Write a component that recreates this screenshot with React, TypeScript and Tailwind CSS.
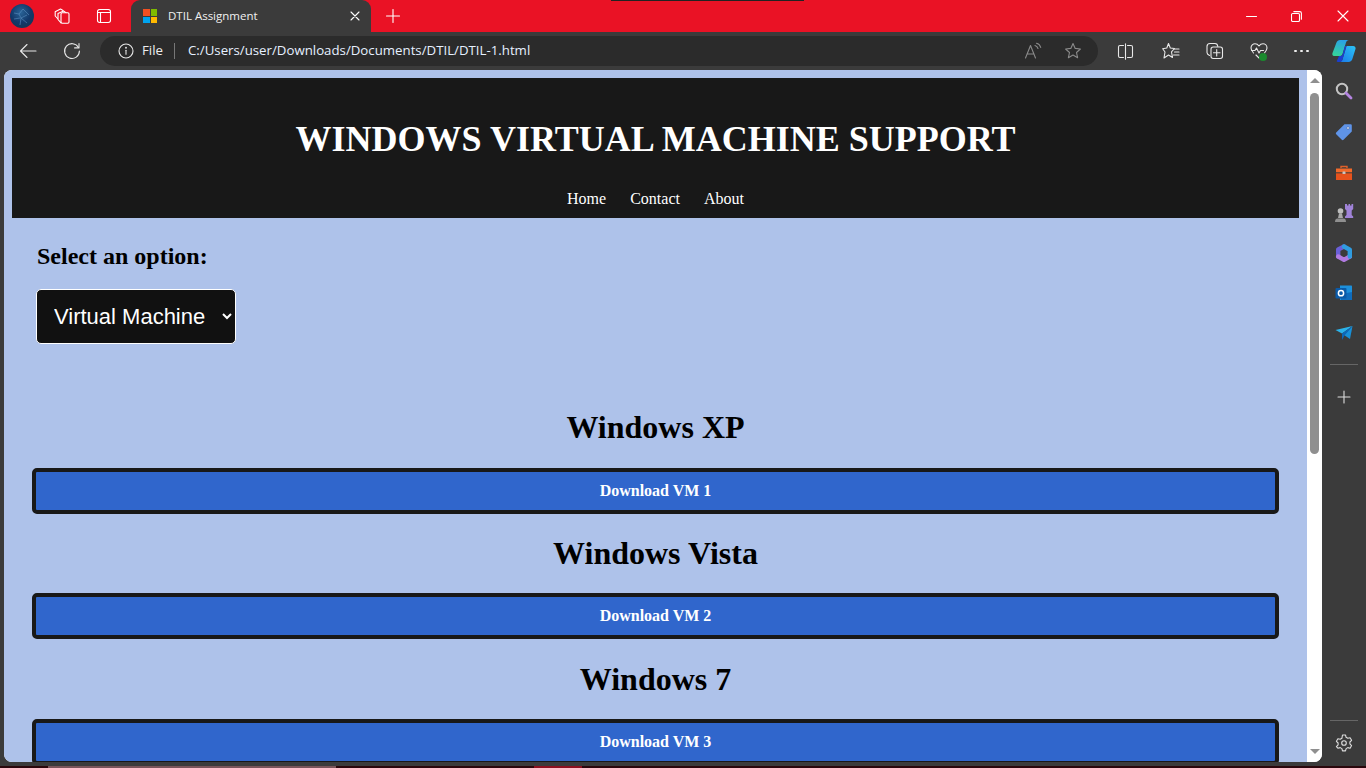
import React from "react";

const S = ({ w = 20, h = 20, vb = "0 0 20 20", children }: { w?: number; h?: number; vb?: string; children: React.ReactNode }) => (
  <svg width={w} height={h} viewBox={vb} fill="none" stroke="currentColor" strokeWidth={1.1} strokeLinecap="round" strokeLinejoin="round" className="block">
    {children}
  </svg>
);

function Slot({ w, children, className = "" }: { w: number; children?: React.ReactNode; className?: string }) {
  return (
    <div className={"flex shrink-0 items-center justify-center " + className} style={{ width: w }}>
      {children}
    </div>
  );
}

function TabBar() {
  return (
    <div className="relative flex h-8 shrink-0 items-center bg-[#ea1225] text-white">
      <div className="absolute left-[611px] top-0 h-px w-[193px] bg-[#222]" />
      <Slot w={44}>
        <svg width="24" height="24" viewBox="0 0 24 24" className="block">
          <defs>
            <radialGradient id="av" cx="45%" cy="35%" r="70%">
              <stop offset="0" stopColor="#2a6498" />
              <stop offset="0.6" stopColor="#12386a" />
              <stop offset="1" stopColor="#123656" />
            </radialGradient>
          </defs>
          <circle cx="12" cy="12" r="12" fill="url(#av)" />
          <path d="M4 9l5 1 4-5M9 10l2 4 6-3M13 5l6 6M11 14l-1 7M11 14l6 5M4 15l6-1" stroke="#5d93c4" strokeWidth="0.7" fill="none" opacity="0.8" />
        </svg>
      </Slot>
      <Slot w={36}>
        <S w={16} h={16} vb="0 0 16 16">
          <path d="M3.500 10.500 1.200 8V3.800L6.500 1l2.500 1.400" />
          <path d="M7 14.800 4 11.500V5.500L9.500 3l2.500 1.600" />
          <rect x="7" y="4.800" width="8" height="10.500" rx="1.200" />
        </S>
      </Slot>
      <Slot w={47}>
        <S w={16} h={16} vb="0 0 16 16">
          <rect x="1.500" y="1.500" width="13" height="13" rx="2.200" />
          <path d="M1.500 4.500h13M4.500 4.500v10" />
        </S>
      </Slot>
      <div className="ml-[4px] flex h-8 w-[240px] shrink-0 items-center rounded-t-[9px] bg-[#3b3b3b]">
        <Slot w={37} className="pl-[1px]">
          <div className="grid h-[14px] w-[14px] grid-cols-2 gap-px">
            <div className="bg-[#f25022]" />
            <div className="bg-[#7fba00]" />
            <div className="bg-[#00a4ef]" />
            <div className="bg-[#ffb900]" />
          </div>
        </Slot>
        <span className="text-[11.5px] leading-none text-[#f0f0f0] [font-family:'Open_Sans',sans-serif]">DTIL Assignment</span>
        <div className="flex-1" />
        <Slot w={32}>
          <S w={10} h={10} vb="0 0 10 10">
            <path d="M1 1l8 8M9 1l-8 8" />
          </S>
        </Slot>
      </div>
      <Slot w={44}>
        <S w={14} h={14} vb="0 0 14 14">
          <path d="M7 0.500v13M0.500 7h13" />
        </S>
      </Slot>
      <div className="flex-1" />
      <Slot w={46}>
        <S w={11} h={11} vb="0 0 11 11">
          <path d="M0.500 5.500h10" />
        </S>
      </Slot>
      <Slot w={45}>
        <S w={11} h={11} vb="0 0 11 11">
          <rect x="0.500" y="2.500" width="8" height="8" rx="1.200" />
          <path d="M2.800 0.600h6c1 0 1.600.6 1.600 1.600v6" />
        </S>
      </Slot>
      <Slot w={47} className="pl-[1px]">
        <S w={12} h={12} vb="0 0 12 12">
          <path d="M1 1l10 10M11 1 1 11" />
        </S>
      </Slot>
    </div>
  );
}

function Toolbar() {
  return (
    <div className="flex h-[38px] shrink-0 items-start bg-[#3b3b3b] pt-[4px] text-[#e8e8e8]">
      <Slot w={55} className="h-[30px]">
        <S w={18} h={18} vb="0 0 18 18">
          <path d="M17 9H1.500M8 2.500 1.500 9 8 15.500" />
        </S>
      </Slot>
      <Slot w={34} className="h-[30px]">
        <S w={18} h={18} vb="0 0 18 18">
          <path d="M15.500 5.500A7.400 7.400 0 1 0 16.400 9" />
          <path d="M16 1.500v4.400h-4.400" />
        </S>
      </Slot>
      <div className="ml-[11px] flex h-[30px] w-[998px] shrink-0 items-center rounded-full bg-[#2b2b2b]">
        <Slot w={17} className="ml-[17px]">
          <S w={16} h={16} vb="0 0 16 16">
            <circle cx="8" cy="8" r="7" />
            <path d="M8 7.200v4" />
            <circle cx="8" cy="4.800" r="0.400" />
          </S>
        </Slot>
        <span className="ml-[8px] text-[13.25px] text-[#eee] [font-family:'Open_Sans',sans-serif]">File</span>
        <div className="ml-[11px] h-[16px] w-px bg-[#777]" />
        <span className="ml-[13px] text-[13.25px] text-[#e6f0ff] [font-family:'Open_Sans',sans-serif]">C:/Users/user/Downloads/Documents/DTIL/DTIL-1.html</span>
        <div className="flex-1" />
        <Slot w={20} className="text-[#8a8a8a]">
          <S w={18} h={18} vb="0 0 18 18">
            <path d="M1.500 16 6.500 3.500 11.500 16M3.200 12h6.600" />
            <path d="M11 3.500c1.500.4 2.500 1.300 3 3M12.500 1.200c2.200.5 3.600 2 4.200 4.200" />
          </S>
        </Slot>
        <Slot w={20} className="ml-[20px] mr-[15px] text-[#8a8a8a]">
          <S w={18} h={18} vb="0 0 18 18">
            <path d="M9 1.600l2.200 4.800 5.200.6-3.900 3.500 1.100 5.200L9 13.100l-4.600 2.600 1.100-5.200L1.600 7l5.200-.6z" />
          </S>
        </Slot>
      </div>
      <Slot w={55} className="h-[30px]">
        <S w={17} h={17} vb="0 0 17 17">
          <path d="M6.500 2.500H3c-1 0-1.500.6-1.500 1.500v9c0 .9.500 1.500 1.500 1.500h3.500M10.500 2.500H14c1 0 1.500.6 1.500 1.500v9c0 .9-.5 1.500-1.500 1.500h-3.500M8.500 0.800v15.400" />
        </S>
      </Slot>
      <Slot w={35} className="h-[30px]">
        <S w={18} h={18} vb="0 0 18 18">
          <path d="M6.500 1.500 8.300 6l4.200.5-3 3.300 1 5.700-4-2.500L2 16l1-6L0.700 6.800 4.800 6z" />
          <path d="M12 7h5M12.500 10H17M11.500 13H17" />
        </S>
      </Slot>
      <Slot w={54} className="h-[30px]">
        <S w={18} h={18} vb="0 0 18 18">
          <path d="M3.500 13.500C2 12.800 1 12 1 10.500V4.500C1 2.800 2.300 1.500 4 1.500h5c1.500 0 2.600 1 2.800 3" />
          <rect x="5" y="5" width="11.500" height="11.500" rx="2.200" />
          <path d="M10.700 7.500v6.500M7.500 10.700H14" />
        </S>
      </Slot>
      <Slot w={34} className="relative h-[30px]">
        <S w={18} h={18} vb="0 0 18 18">
          <path d="M3.500 11C1.800 9 1 7.800 1 6 1 3.500 3 1.800 5 1.800c1.600 0 3 .8 4 2.200 1-1.400 2.400-2.200 4-2.200 2 0 4 1.700 4 4.200 0 1.800-.8 3-2.500 5" />
          <path d="M1.500 8.500h3.500l1.500-2.500 2.500 5 1.500-2.500h3" />
          <path d="M6 13l3 3" />
        </S>
        <div className="absolute left-[17px] top-[17px] h-[8px] w-[8px] rounded-full bg-[#1a8a2e]" />
      </Slot>
      <Slot w={50} className="h-[30px]">
        <div className="flex gap-[3px]">
          <div className="h-[2px] w-[3px] rounded-full bg-[#eee]" />
          <div className="h-[2px] w-[3px] rounded-full bg-[#eee]" />
          <div className="h-[2px] w-[3px] rounded-full bg-[#eee]" />
        </div>
      </Slot>
      <Slot w={36} className="h-[30px]">
        <svg width="24" height="24" viewBox="0 0 24 24" className="block">
          <defs>
            <linearGradient id="c1" x1="0.600" y1="0" x2="0.300" y2="1">
              <stop offset="0" stopColor="#2a9fe8" />
              <stop offset="1" stopColor="#35d49a" />
            </linearGradient>
            <linearGradient id="c2" x1="0" y1="1" x2="1" y2="0">
              <stop offset="0" stopColor="#1a78e8" />
              <stop offset="1" stopColor="#2cc4f5" />
            </linearGradient>
          </defs>
          <path d="M8 1h9c-1.500 0-2.500 1-3 2.500L10.500 15c-.5 1.500-1.500 2-3 2H2C.5 17 0 15.500.5 14L4.500 3.500C5 2 6.500 1 8 1z" fill="url(#c1)" />
          <path d="M14.500 7H21c2 0 3 1.500 2.500 3L20.500 19.500C20 21.500 18.500 23 16.500 23H7.500c1.500 0 2.500-1 3-2.500z" fill="url(#c2)" />
          <path d="M10.500 15.500 13 7h1.500l-4 13.500c-.5 1.500-1.500 2.500-3 2.500H6c-1.500 0-1.500-1-1-1.500L7 17c2 0 3 0 3.500-1.500z" fill="#1a3fd0" />
        </svg>
      </Slot>
    </div>
  );
}

function Heading({ children }: { children: React.ReactNode }) {
  return <h2 className="m-0 h-[79.67px] pt-[21.3px] text-center text-[32px] font-bold leading-[37px] text-black">{children}</h2>;
}

function DownloadButton({ label }: { label: string }) {
  return (
    <button className="block h-[46px] w-full rounded-[5px] border-4 border-[#181818] bg-[#3066cc] text-[16px] font-bold text-white [font-family:'Liberation_Serif',serif]">
      {label}
    </button>
  );
}

function Page() {
  return (
    <div className="flex h-[692px] w-[1318px] shrink-0 overflow-hidden rounded-lg bg-white">
      <div className="h-full w-[1303px] shrink-0 overflow-hidden bg-[#aec2ea] px-2 pt-2 [font-family:'Liberation_Serif',serif]">
        <header className="h-[140px] bg-[#181818] text-white">
          <h1 className="m-0 pt-[41px] text-center text-[36px] font-bold leading-[41px]">WINDOWS VIRTUAL MACHINE SUPPORT</h1>
          <nav className="mt-[30px] flex justify-center gap-6 text-[16px] leading-[18px]">
            <span>Home</span>
            <span>Contact</span>
            <span>About</span>
          </nav>
        </header>
        <div className="px-5">
          <div className="pl-[5px] pt-[25px] text-[24px] font-bold leading-[27px] text-black">Select an option:</div>
          <select
            defaultValue="vm"
            className="ml-[4px] mt-[19px] block h-[55px] w-[200px] rounded-[5px] border border-white bg-[#111111] pl-[13px] text-[22px] text-white [font-family:'Liberation_Sans',sans-serif]"
          >
            <option value="vm">Virtual Machine</option>
          </select>
          <div className="pt-[44px]">
            <Heading>Windows XP</Heading>
            <DownloadButton label="Download VM 1" />
            <Heading>Windows Vista</Heading>
            <DownloadButton label="Download VM 2" />
            <Heading>Windows 7</Heading>
            <DownloadButton label="Download VM 3" />
          </div>
        </div>
      </div>
      <div className="flex w-[15px] shrink-0 flex-col items-center bg-white pt-[8px]">
        <div className="h-0 w-0 border-x-[5px] border-b-[5px] border-x-transparent border-b-[#8f8f8f]" />
        <div className="mt-[10px] h-[361px] w-[9px] rounded-full bg-[#8f8f8f]" />
        <div className="flex-1" />
        <div className="mb-[8px] h-0 w-0 border-x-[5px] border-t-[5px] border-x-transparent border-t-[#8f8f8f]" />
      </div>
    </div>
  );
}

function SideIcon({ children, mt }: { children: React.ReactNode; mt: number }) {
  return (
    <div className="flex h-5 w-full items-center justify-center" style={{ marginTop: mt }}>
      {children}
    </div>
  );
}

function Sidebar() {
  return (
    <div className="flex h-full w-[44px] shrink-0 flex-col items-center bg-[#3b3b3b] pt-[11px] text-[#ddd]">
      <SideIcon mt={0}>
        <svg width="18" height="18" viewBox="0 0 18 18" fill="none" className="block">
          <circle cx="7" cy="7" r="5.200" stroke="#c4c4c4" strokeWidth="2" />
          <path d="M11 11l5 5" stroke="#b484e0" strokeWidth="2.800" strokeLinecap="round" />
        </svg>
      </SideIcon>
      <SideIcon mt={21}>
        <svg width="18" height="18" viewBox="0 0 18 18" className="block">
          <path d="M9.500 1.200h6c.8 0 1.300.5 1.300 1.300v6L8.500 16.800c-.5.500-1.200.5-1.700 0L1.200 11.200c-.5-.5-.5-1.200 0-1.700z" fill="#5f94e8" />
          <circle cx="13" cy="5" r="1.300" fill="#e8eefc" stroke="#31528c" strokeWidth="0.500" />
        </svg>
      </SideIcon>
      <SideIcon mt={21}>
        <svg width="18" height="16" viewBox="0 0 18 16" className="block">
          <path d="M6 3V1.500h6V3" fill="none" stroke="#e0602a" strokeWidth="1.400" />
          <path d="M1 3.500h16v3.800H1z" fill="#f26a2a" />
          <path d="M1 8.300h16V15H1z" fill="#e6521c" />
          <rect x="7.500" y="6.500" width="3" height="2.500" rx="0.500" fill="#c9c4c0" />
        </svg>
      </SideIcon>
      <SideIcon mt={20}>
        <svg width="20" height="20" viewBox="0 0 20 20" className="block">
          <path d="M11 1h2v1.500h1.500V1H16v1.500h1.500V1h1.700v5l-1.500 1.500V12l1.500 1.500V15H11v-1.500l1.500-1.500V7.500L11 6z" fill="#a083d8" />
          <circle cx="6.500" cy="8" r="2.800" fill="#bdbdbd" />
          <path d="M5 10.500h3l1 4.500H4z" fill="#a9a9a9" />
          <path d="M1 19c0-2.500 1-3.500 2.500-3.500h6C11 15.500 12 16.500 12 19z" fill="#8f8f8f" />
        </svg>
      </SideIcon>
      <SideIcon mt={20}>
        <svg width="18" height="18" viewBox="0 0 18 18" fill="none" strokeWidth="4.400" strokeLinejoin="round" strokeLinecap="round" className="block">
          <path d="M3.200 12.500V5.500L9 2.500" stroke="#6a5fd8" />
          <path d="M3.200 12.500 9 15.800l5.800-3.300" stroke="#b07ae0" />
          <path d="M9 2.500l5.800 3.200v6.800" stroke="#2f9ce0" />
        </svg>
      </SideIcon>
      <SideIcon mt={20}>
        <svg width="18" height="18" viewBox="0 0 18 18" className="block">
          <path d="M5 1.500h11c.6 0 1 .4 1 1V15c0 .6-.4 1-1 1H5z" fill="#1c90dc" />
          <path d="M6 10l11-2v8H6z" fill="#0f6cbd" />
          <rect x="0.500" y="4" width="11" height="10.500" rx="1" fill="#0a5aa8" />
          <circle cx="6" cy="9.200" r="2.600" fill="none" stroke="#fff" strokeWidth="1.500" />
        </svg>
      </SideIcon>
      <SideIcon mt={20}>
        <svg width="18" height="16" viewBox="0 0 18 16" className="block">
          <path d="M0.500 5 17.500 1 7 8.500z" fill="#2bb3ea" />
          <path d="M17.500 1 15 14 9 10z" fill="#1790d8" />
          <path d="M17.500 1 7 8.500V15l2.500-4.500z" fill="#0d68b8" />
        </svg>
      </SideIcon>
      <div className="mt-[21px] h-px w-[28px] bg-[#666]" />
      <SideIcon mt={22}>
        <S w={14} h={14} vb="0 0 14 14">
          <path d="M7 1v12M1 7h12" />
        </S>
      </SideIcon>
      <div className="flex-1" />
      <div className="h-px w-[28px] bg-[#666]" />
      <SideIcon mt={12}>
        <S w={18} h={18} vb="0 0 18 18">
          <path d="M7.500 1.500h3l.6 2.300 1.700 1 2.300-.6 1.500 2.600-1.700 1.700v1.900l1.700 1.700-1.500 2.600-2.300-.6-1.700 1-.6 2.300h-3l-.6-2.300-1.700-1-2.300.6L1.400 13.100 3.100 11.400V9.500L1.400 7.800l1.500-2.600 2.300.6 1.700-1z" transform="translate(0 -.5)" />
          <circle cx="9" cy="9" r="2.300" />
        </S>
      </SideIcon>
      <div className="h-[13px]" />
    </div>
  );
}

export default function App() {
  return (
    <div className="flex h-[768px] w-[1366px] flex-col overflow-hidden bg-[#3b3b3b]">
      <TabBar />
      <Toolbar />
      <div className="flex h-[696px] shrink-0 pl-[4px]">
        <Page />
        <Sidebar />
      </div>
      <div className="flex h-[2px] shrink-0 bg-[#2a070c]">
        <div className="ml-[48px] w-[288px] bg-[#7a555a]" />
        <div className="ml-[198px] w-[48px] bg-[#8c1020]" />
      </div>
    </div>
  );
}
